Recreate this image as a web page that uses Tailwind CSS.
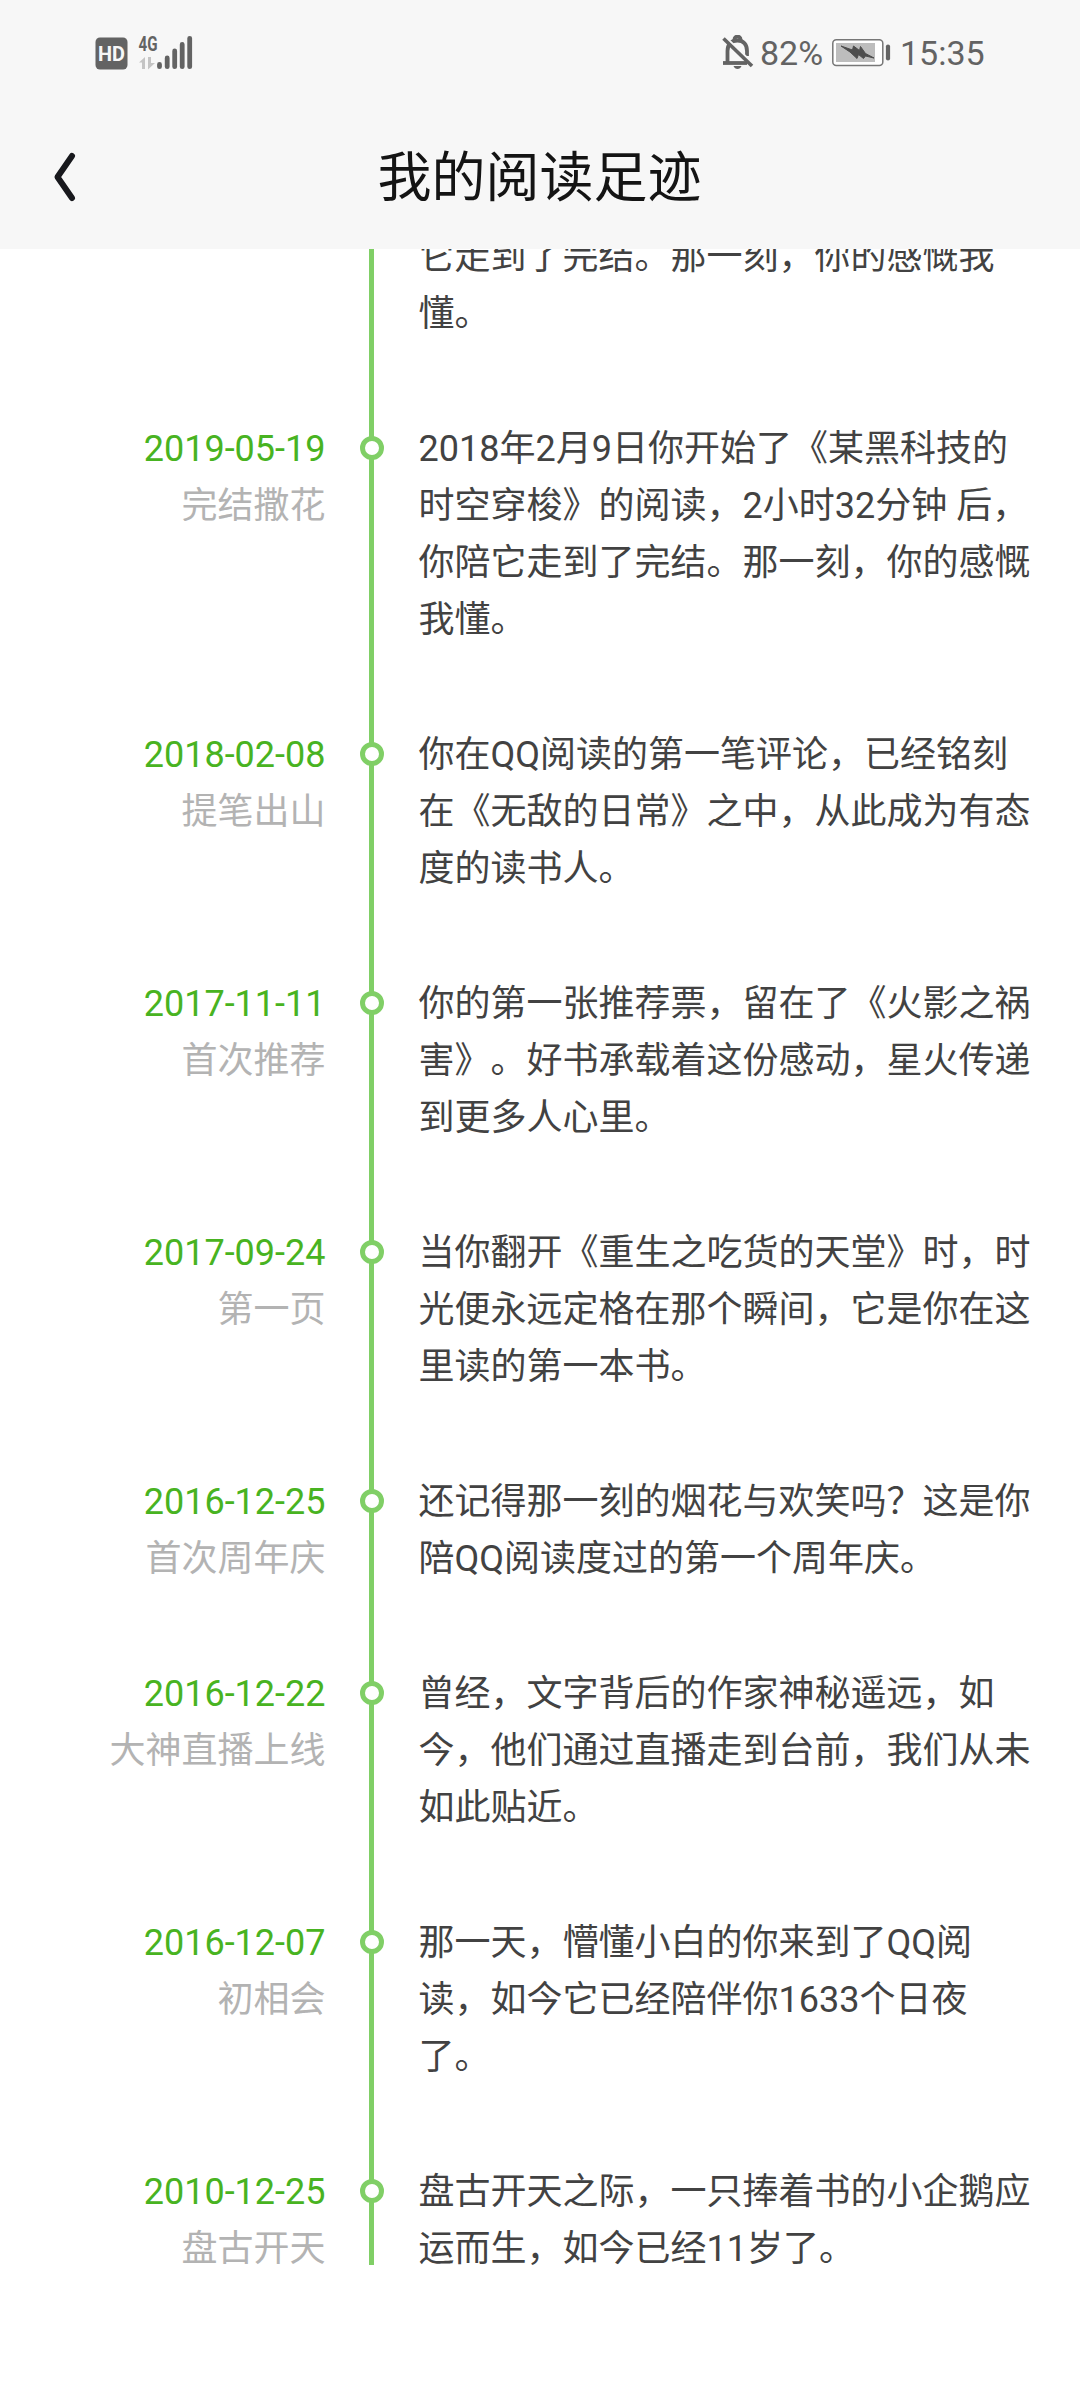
<!DOCTYPE html>
<html lang="zh-CN">
<head>
    <meta charset="UTF-8">
    <meta name="viewport" content="width=device-width, initial-scale=1.0">
    <title>我的阅读足迹</title>
    <script src="https://cdn.jsdelivr.net/npm/@tailwindcss/browser@4"></script>
</head>
<body class="bg-white font-[Roboto,'Noto_Sans_CJK_SC',sans-serif]">
<div class="w-[1080px] h-[2400px] overflow-hidden bg-white">

    <header class="h-[249px] bg-[#f7f7f7]">
        <!-- Status bar -->
        <div class="h-[106px] flex items-center justify-between pl-[95px] pr-[97px] text-[#636363]">
            <svg class="w-[100px] h-[36px] overflow-visible" viewBox="95 35 100 36">
                <rect x="95.500" y="37.500" width="32" height="32" rx="4.500" fill="#636363"/>
                <text x="111.500" y="60.800" text-anchor="middle" textLength="27" lengthAdjust="spacingAndGlyphs" font-family="Roboto" font-size="21" font-weight="700" fill="#f7f7f7">HD</text>
                <text x="138.500" y="51" textLength="19" lengthAdjust="spacingAndGlyphs" font-family="Roboto" font-size="21" font-weight="700" fill="#636363">4G</text>
                <path d="M139 62.500l6-5.500v12h-3v-6.500zM148 57h3v6h4l-7 6.500z" fill="#c4c4c4"/>
                <g stroke="#636363" stroke-width="4.800" stroke-linecap="round">
                    <path d="M159.500 64.500v2.200M167.200 58v8.700M174.700 51v15.700M182.200 44.500v22.200M189.700 38.300v28.400"/>
                </g>
            </svg>

            <div class="flex items-center">
                <svg class="w-[32px] h-[36px]" viewBox="722 35 32 36">
                    <g fill="none" stroke="#636363" stroke-width="3.800">
                        <path d="M727.500 63V51c0-7 4-10.500 10-10.500s9.500 4 9.500 10.500v5"/>
                        <path d="M723 63h24"/>
                        <path d="M734.500 41v-1.500a3 3 0 0 1 6 0V41"/>
                    </g>
                    <path d="M723 42.500l26 25" stroke="#f7f7f7" stroke-width="3" transform="translate(2.500 -5)"/>
                    <path d="M723.500 38.500l28.500 27.500" stroke="#636363" stroke-width="3.600"/>
                    <path d="M733.500 66h8c-.7 2-2.300 3-4 3s-3.300-1-4-3z" fill="#636363"/>
                </svg>
                <span class="ml-[6px] w-[64px] text-[34px] leading-9 whitespace-nowrap">82%</span>
                <svg class="ml-[7px] w-[60px] h-[30px]" viewBox="831 38 60 30">
                    <rect x="832.800" y="39.800" width="50" height="25.600" rx="3.500" fill="#fff" stroke="#777" stroke-width="1.500"/>
                    <rect x="836" y="43" width="39" height="19" fill="#bdbdbd"/>
                    <path d="M841 46l11.500 4 1-4 6 4.500 1-4 5 7 8.500 4.500-8.500-2-2 2.500-5-4-1.500 4-7-6.500z" fill="#4d4d4d" stroke="#4d4d4d"/>
                    <path d="M888 46.500v12" stroke="#636363" stroke-width="4.200" stroke-linecap="round"/>
                </svg>
                <span class="ml-[9px] w-[83px] text-[34px] leading-9 whitespace-nowrap">15:35</span>
            </div>
        </div>

        <!-- Title bar -->
        <div class="h-[143px] grid grid-cols-[100px_1fr_100px] items-center">
            <svg class="ml-[50px] -mt-px w-[30px] h-[54px]" viewBox="50 150 30 54" fill="none" stroke="#18191d" stroke-width="6" stroke-linecap="round" stroke-linejoin="round">
                <path d="M72 156L57.500 177L72 198"/>
            </svg>
            <h1 class="pt-0.5 -ml-px text-center text-[54px] leading-[80px] text-[#141414]">我的阅读足迹</h1>
        </div>
    </header>

    <main class="h-[2151px] overflow-hidden">
        <div class="-mt-[22px] whitespace-nowrap text-4xl/[57px] text-[#424242] [text-spacing-trim:space-all]">

            <section class="flex h-[192px]">
                <div class="w-[325px]"></div>
                <div class="ml-[44px] w-[5px] bg-[#80cf66]"></div>
                <p class="ml-[44.5px] pt-0.5">它走到了完结。那一刻，你的感慨我<br>懂。</p>
            </section>

            <section class="flex h-[306px]">
                <div class="w-[325.5px] pt-0.5 text-right">
                    <div class="text-[#48b321]">2019-05-19</div>
                    <div class="text-[#b3b3b3]">完结撒花</div>
                </div>
                <div class="relative ml-[43.5px] w-[5px] bg-[#80cf66]">
                    <span class="absolute top-[17px] -left-[9px] size-6 rounded-full border-5 border-[#80cf66] bg-white"></span>
                </div>
                <p class="ml-[44.5px] pt-0.5">2018年2月9日你开始了《某黑科技的<br>时空穿梭》的阅读，2小时32分钟 后，<br>你陪它走到了完结。那一刻，你的感慨<br>我懂。</p>
            </section>

            <section class="flex h-[249px]">
                <div class="w-[325.5px] pt-0.5 text-right">
                    <div class="text-[#48b321]">2018-02-08</div>
                    <div class="text-[#b3b3b3]">提笔出山</div>
                </div>
                <div class="relative ml-[43.5px] w-[5px] bg-[#80cf66]">
                    <span class="absolute top-[17px] -left-[9px] size-6 rounded-full border-5 border-[#80cf66] bg-white"></span>
                </div>
                <p class="ml-[44.5px] pt-0.5">你在QQ阅读的第一笔评论，已经铭刻<br>在《无敌的日常》之中，从此成为有态<br>度的读书人。</p>
            </section>

            <section class="flex h-[249px]">
                <div class="w-[325.5px] pt-0.5 text-right">
                    <div class="text-[#48b321]">2017-11-11</div>
                    <div class="text-[#b3b3b3]">首次推荐</div>
                </div>
                <div class="relative ml-[43.5px] w-[5px] bg-[#80cf66]">
                    <span class="absolute top-[17px] -left-[9px] size-6 rounded-full border-5 border-[#80cf66] bg-white"></span>
                </div>
                <p class="ml-[44.5px] pt-0.5">你的第一张推荐票，留在了《火影之祸<br>害》。好书承载着这份感动，星火传递<br>到更多人心里。</p>
            </section>

            <section class="flex h-[249px]">
                <div class="w-[325.5px] pt-0.5 text-right">
                    <div class="text-[#48b321]">2017-09-24</div>
                    <div class="text-[#b3b3b3]">第一页</div>
                </div>
                <div class="relative ml-[43.5px] w-[5px] bg-[#80cf66]">
                    <span class="absolute top-[17px] -left-[9px] size-6 rounded-full border-5 border-[#80cf66] bg-white"></span>
                </div>
                <p class="ml-[44.5px] pt-0.5">当你翻开《重生之吃货的天堂》时，时<br>光便永远定格在那个瞬间，它是你在这<br>里读的第一本书。</p>
            </section>

            <section class="flex h-[192px]">
                <div class="w-[325.5px] pt-0.5 text-right">
                    <div class="text-[#48b321]">2016-12-25</div>
                    <div class="text-[#b3b3b3]">首次周年庆</div>
                </div>
                <div class="relative ml-[43.5px] w-[5px] bg-[#80cf66]">
                    <span class="absolute top-[17px] -left-[9px] size-6 rounded-full border-5 border-[#80cf66] bg-white"></span>
                </div>
                <p class="ml-[44.5px] pt-0.5">还记得那一刻的烟花与欢笑吗？这是你<br>陪QQ阅读度过的第一个周年庆。</p>
            </section>

            <section class="flex h-[249px]">
                <div class="w-[325.5px] pt-0.5 text-right">
                    <div class="text-[#48b321]">2016-12-22</div>
                    <div class="text-[#b3b3b3]">大神直播上线</div>
                </div>
                <div class="relative ml-[43.5px] w-[5px] bg-[#80cf66]">
                    <span class="absolute top-[17px] -left-[9px] size-6 rounded-full border-5 border-[#80cf66] bg-white"></span>
                </div>
                <p class="ml-[44.5px] pt-0.5">曾经，文字背后的作家神秘遥远，如<br>今，他们通过直播走到台前，我们从未<br>如此贴近。</p>
            </section>

            <section class="flex h-[249px]">
                <div class="w-[325.5px] pt-0.5 text-right">
                    <div class="text-[#48b321]">2016-12-07</div>
                    <div class="text-[#b3b3b3]">初相会</div>
                </div>
                <div class="relative ml-[43.5px] w-[5px] bg-[#80cf66]">
                    <span class="absolute top-[17px] -left-[9px] size-6 rounded-full border-5 border-[#80cf66] bg-white"></span>
                </div>
                <p class="ml-[44.5px] pt-0.5">那一天，懵懂小白的你来到了QQ阅<br>读，如今它已经陪伴你1633个日夜<br>了。</p>
            </section>

            <section class="flex h-[103px]">
                <div class="w-[325.5px] pt-0.5 text-right">
                    <div class="text-[#48b321]">2010-12-25</div>
                    <div class="text-[#b3b3b3]">盘古开天</div>
                </div>
                <div class="relative ml-[43.5px] w-[5px] bg-[#80cf66]">
                    <span class="absolute top-[17px] -left-[9px] size-6 rounded-full border-5 border-[#80cf66] bg-white"></span>
                </div>
                <p class="ml-[44.5px] pt-0.5">盘古开天之际，一只捧着书的小企鹅应<br>运而生，如今已经11岁了。</p>
            </section>
        </div>
    </main>
</div>
</body>
</html>
